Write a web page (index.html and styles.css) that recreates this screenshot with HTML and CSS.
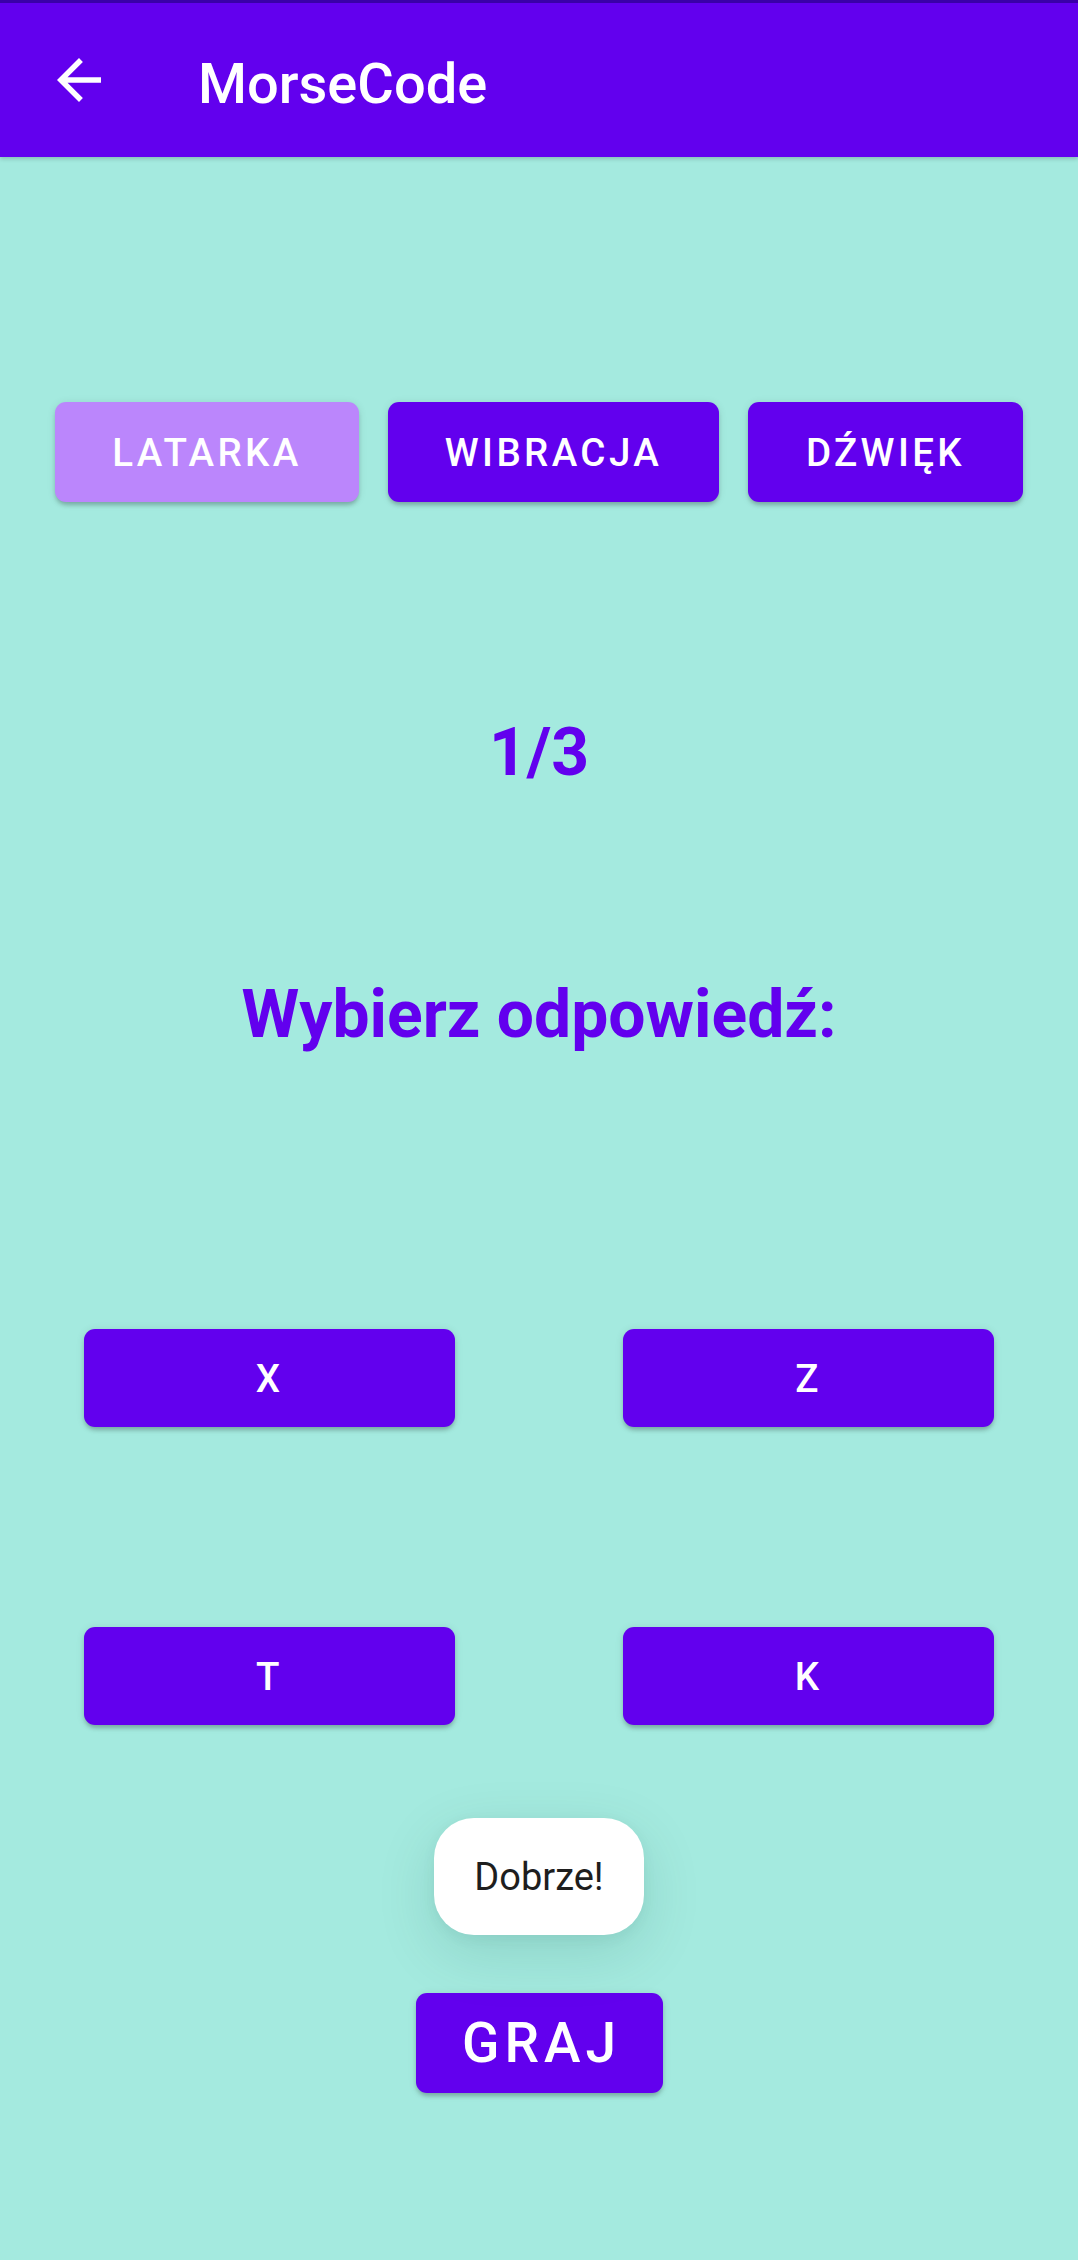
FILE: index.html
```html
<!DOCTYPE html>
<html lang="pl">
<head>
<meta charset="utf-8">
<title>MorseCode</title>
<link rel="stylesheet" href="styles.css">
</head>
<body>
<header class="appbar">
  <svg class="back" viewBox="0 0 24 24" width="66" height="66" aria-hidden="true">
    <path fill="#ffffff" d="M20 11H7.83l5.59-5.59L12 4l-8 8 8 8 1.41-1.41L7.83 13H20v-2z"/>
  </svg>
  <h1 class="title">MorseCode</h1>
</header>
<main class="screen">
  <div class="modes">
    <button class="btn btn-mode btn-off">Latarka</button>
    <button class="btn btn-mode">Wibracja</button>
    <button class="btn btn-mode">Dźwięk</button>
  </div>
  <p class="counter">1/3</p>
  <p class="prompt">Wybierz odpowiedź:</p>
  <div class="answers">
    <div class="cell"><button class="btn btn-answer">X</button></div>
    <div class="cell"><button class="btn btn-answer">Z</button></div>
    <div class="cell"><button class="btn btn-answer">T</button></div>
    <div class="cell"><button class="btn btn-answer">K</button></div>
  </div>
  <div class="play-row">
    <button class="btn btn-play">Graj</button>
  </div>
  <div class="toast">Dobrze!</div>
</main>
</body>
</html>
```
FILE: styles.css
```css
html, body {
  margin: 0;
  padding: 0;
}
body {
  width: 1078px;
  min-height: 2260px;
  background: #a4eadf;
  font-family: Roboto, "Noto Sans", "Liberation Sans", sans-serif;
  position: relative;
}
.appbar {
  box-sizing: border-box;
  height: 157px;
  background: #6200ee;
  border-top: 3px solid #3a00a8;
  display: flex;
  align-items: center;
  padding-left: 46px;
  box-shadow: 0 2px 4px rgba(0, 0, 0, 0.18);
  position: relative;
  z-index: 1;
}
.back {
  display: block;
  flex: none;
}
.title {
  margin: 8px 0 0 86px;
  color: #ffffff;
  font-size: 56px;
  font-weight: 500;
  line-height: 64px;
}
.screen {
  display: flex;
  flex-direction: column;
}
.btn {
  border: none;
  margin: 0;
  padding: 0;
  font-family: Roboto, "Noto Sans", "Liberation Sans", sans-serif;
  font-weight: 500;
  color: #ffffff;
  background: #6200ee;
  text-transform: uppercase;
  border-radius: 11px;
  box-shadow: 0 4px 4px -1px rgba(0, 0, 0, 0.22), 0 1px 8px rgba(0, 0, 0, 0.1);
  display: flex;
  align-items: center;
  justify-content: center;
}
.modes {
  margin-top: 245px;
  padding-left: 55px;
  display: grid;
  grid-template-columns: 304px 331px 275px;
  column-gap: 29px;
}
.btn-mode {
  height: 100px;
  font-size: 38.5px;
  letter-spacing: 3.4px;
}
.btn-off {
  background: #bb86fc;
}
.counter {
  margin: 212px 0 0;
  text-align: center;
  color: #6200ee;
  font-size: 66px;
  font-weight: 700;
  line-height: 77px;
}
.prompt {
  margin: 185px 0 0;
  text-align: center;
  color: #6200ee;
  font-size: 66px;
  font-weight: 700;
  line-height: 77px;
}
.answers {
  margin-top: 276px;
  display: grid;
  grid-template-columns: 1fr 1fr;
  row-gap: 200px;
}
.cell {
  display: flex;
  justify-content: center;
}
.btn-answer {
  width: 371px;
  height: 98px;
  font-size: 38.5px;
  letter-spacing: 3.4px;
}
.play-row {
  margin-top: 268px;
  display: flex;
  justify-content: center;
}
.btn-play {
  width: 247px;
  height: 100px;
  font-size: 55px;
  letter-spacing: 5px;
  padding-left: 5px;
}
.toast {
  position: absolute;
  top: 1818px;
  left: 50%;
  transform: translateX(-50%);
  box-sizing: border-box;
  width: 210px;
  height: 117px;
  border-radius: 40px;
  background: #ffffff;
  color: #1e1e1e;
  font-size: 38px;
  display: flex;
  align-items: center;
  justify-content: center;
  box-shadow: 0 18px 60px rgba(0, 70, 60, 0.14), 0 4px 14px rgba(0, 70, 60, 0.06);
}
```
